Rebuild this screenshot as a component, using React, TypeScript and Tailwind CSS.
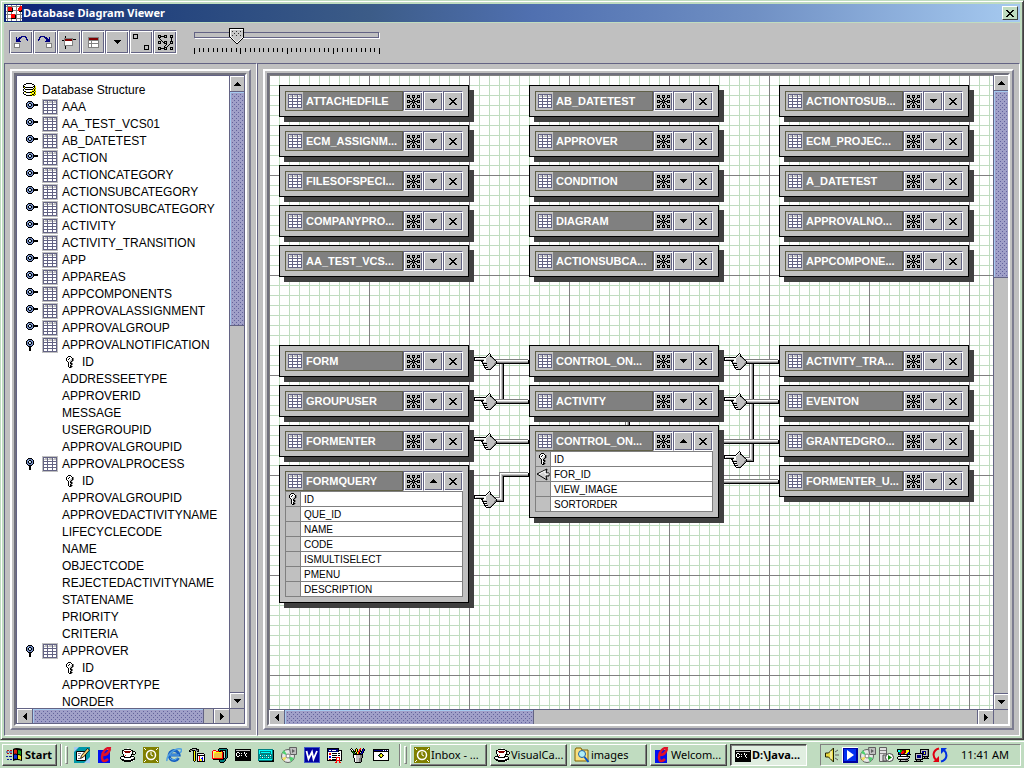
import React, { useState } from "react";

/* ---------- pixel drawings ---------- */

const INK: Record<string, string> = {
  k: "#000000", w: "#ffffff", g: "#808080", s: "#c0c0c0", d: "#404040",
  r: "#ff0000", m: "#800000", b: "#0000ff", n: "#000080", y: "#ffff00",
  o: "#808000", t: "#008080", c: "#00ffff", e: "#00a000", p: "#636384",
  l: "#a6caf0", a: "#f0c040", u: "#2070d0", v: "#7088c0", q: "#fff0a0",
};

function Pix({ rows, className }: { rows: string[]; className?: string }) {
  const width = Math.max(...rows.map((r) => r.length));
  return (
    <svg
      width={width}
      height={rows.length}
      viewBox={`0 0 ${width} ${rows.length}`}
      shapeRendering="crispEdges"
      aria-hidden="true"
      className={className ?? "shrink-0"}
    >
      {pixels(rows)}
    </svg>
  );
}

function pixels(rows: string[]) {
  const cells: React.ReactNode[] = [];
  rows.forEach((row, y) => {
    let x = 0;
    while (x < row.length) {
      const ch = row[x];
      let end = x + 1;
      while (end < row.length && row[end] === ch) end++;
      if (INK[ch]) {
        cells.push(<rect key={`${x}-${y}`} x={x} y={y} width={end - x} height={1} fill={INK[ch]} />);
      }
      x = end;
    }
  });
  return cells;
}

const DOWN = ["kkkkkkk", ".kkkkk.", "..kkk..", "...k..."];
const UP = [...DOWN].reverse();
const LEFT = ["...k", "..kk", ".kkk", "kkkk", ".kkk", "..kk", "...k"];
const RIGHT = LEFT.map((r) => [...r].reverse().join(""));
const CROSS = ["kk....kk", ".kk..kk.", "..kkkk..", "...kk...", "..kkkk..", ".kk..kk.", "kk....kk"];

const NETWORK = [
  "kkk..kkk..kkk",
  "k.k..k.k..k.k",
  "kkk..kkk..kkk",
  "...k..k..k...",
  "....k.k.k....",
  "kkk..kkk..kkk",
  "k.kkkk.kkkk.k",
  "kkk..kkk..kkk",
  "....k.k.k....",
  "...k..k..k...",
  "kkk..kkk..kkk",
  "k.k..k.k..k.k",
  "kkk..kkk..kkk",
];

const GRID = [
  "pppppppppppppp",
  "pwsspwssspwssp",
  "pssspsssspsssp",
  "pwwwpwwwwpwwwp",
  "pppppppppppppp",
  "pwwwpwwwwpwwwp",
  "pwwwpwwwwpwwwp",
  "pppppppppppppp",
  "pwwwpwwwwpwwwp",
  "pwwwpwwwwpwwwp",
  "pppppppppppppp",
  "pwwwpwwwwpwwwp",
  "pwwwpwwwwpwwwp",
  "pppppppppppppp",
];

const KEY = [
  "..kkk...",
  ".kwwwk..",
  "kwwkwwkg",
  "kwkwwskg",
  "kwwwsskg",
  ".kwsskg.",
  "..kwkg..",
  "..kwkkg.",
  "..kwskg.",
  "..kwkg..",
  "..kwkkg.",
  "...kkg..",
];

const HANDLE_CLOSED = [
  "..kkkk......",
  ".kvvvvk.....",
  "kvlkkvvk....",
  "kvkwlkvkkkkk",
  "kvkllkvkkkkk",
  "kvvkkvvk....",
  ".kvvvvk.....",
  "..kkkk......",
];
const HANDLE_OPEN = [
  "..kkkk..",
  ".kvvvvk.",
  "kvlkkvvk",
  "kvkwlkvk",
  "kvkllkvk",
  "kvvkkvvk",
  ".kvvvvk.",
  "..kkkk..",
  "...kk...",
  "...kk...",
  "...kk...",
  "...kk...",
];

const DATABASE = [
  "...kkkkkk....",
  ".kkwwwwwwkk..",
  "kwwwwwwwwwwk.",
  "kkwwwwwwwwkky",
  "kykkkkkkkkwky",
  ".kwwwwwwwwkyo",
  "kwkkkkkkkkyky",
  "kwwwwwwwwyyky",
  ".kkwwwwyykkyo",
  "kwykkkkkkyyky",
  "kwwwwwwwyyyky",
  ".kkwwwwyykkyo",
  "...kkkkkkyoo.",
];

const UNDO = [
  ".......nnnnn..",
  "..n..nnn...nn.",
  "..n.nnn.....n.",
  "..nnnn......nn",
  "..nnnn.......n",
  "..nnnnn.......",
  "..............",
  "gggggg........",
  "gwwwwg........",
  "gwwwwg........",
  "gwwwwg........",
  "gggggg........",
];
const REDO = UNDO.map((r) => [...r].reverse().join(""));
const PIVOT = [
  "...k..........",
  "...k..........",
  "..ggggggggg...",
  "..gmmmmmmmgkkk",
  "kkgmmmmmmmg...",
  "..gwwwwwwwg...",
  "..gwwwwwwwg...",
  "..gwwwwwwwg...",
  "..gwwwwwwwg...",
  "..ggggggggg...",
  "...k..........",
  "...k..........",
  "...k..........",
];
const FORM = [
  "ggggggggggg",
  "gmmmmmmmmmg",
  "gmmmmmmmmmg",
  "ggggggggggg",
  "gwwgwwwwwwg",
  "gwwgwwwwwwg",
  "ggggggggggg",
  "gwwgwwwwwwg",
  "gwwgwwwwwwg",
  "gwwgwwwwwwg",
  "ggggggggggg",
];
const TWO_BOXES = [
  "kkkkk...........",
  "k...k...........",
  "k...k...........",
  "k...k...........",
  "kkkkk...........",
  "................",
  "................",
  "................",
  "................",
  "................",
  "................",
  "...........kkkkk",
  "...........k...k",
  "...........k...k",
  "...........k...k",
  "...........kkkkk",
];
const WEB = [
  "kkk...kkk...kkk",
  "k.kkkkk.k...k.k",
  "kkk...kkk...kkk",
  ".k...........k.",
  "..k..........k.",
  "...k.........k.",
  "kkk.k.kkk...kkk",
  "k.k..kk.k...k.k",
  "kkk...kkk...kkk",
  "........k..k...",
  ".......k..k....",
  "......k..k.....",
  "kkk...kkk...kkk",
  "k.kkkkk.k...k.k",
  "kkk...kkk...kkk",
];
const APP = [
  "wgwwwgwwwwgwwwgw",
  "ggggggggggggggrr",
  "wgrrrrgwwwgwwrrr",
  "wgrrrrkwwwgwrrrr",
  "wgrrrrkwwwgwrrrr",
  "wgrrrrkgggggrrrk",
  "ggkkkkkwwwgwwkkk",
  "wgwwwgwwwwgwwwgw",
  "wgwwwgwwwwgwwwgw",
  "gggggrrrrggggggg",
  "wgwwwrrrrkgwwwgw",
  "wgwwwrrrrkgwwwgw",
  "wgwwwrrrrkgwwwgw",
  "gggggkkkkkgggggg",
  "wgwwwgwwwwgwwwgw",
  "wgwwwgwwwwgwwwgw",
];

const HAND = [
  "...............k.......",
  "..............kwk......",
  ".............kwsk......",
  "............kwsskk.....",
  "kkkkkkkkkkkkwssssgk....",
  "kwwwwwwwwwwwssssssgk...",
  "kwsssssssswwsssssssgk..",
  "kkkkkkkkkkwwssssssssgk.",
  ".......kkwwwssssssssssk",
  "........kssssssssssssgk",
  "........kkkkksssssssggk",
  ".........kwwssssssssgk.",
  ".........kkkkssssssgk..",
  "..........kwwsssssgk...",
  "..........kkkksssgk....",
  "...........kwwssgk.....",
  "............kkkkk......",
];

/* ---------- taskbar drawings ---------- */

const CUP = [
  ".......ww.......",
  "....kkkkkkk.....",
  "..kkwwwwwwwkk...",
  "..kwmmmmmmmwkkk.",
  "..kwwmmmmmwwk.wk",
  "..kwwwwwwwwwk.wk",
  "...kwwwwwwwkkkk.",
  "...kwrwwwwwkw...",
  ".kkkkwwwwwkkkk..",
  "kwwwkkkkkkkwwwk.",
  "kswwwwwwwwwwwgk.",
  ".kkkwwwwwwwkkkk.",
  "..kkkkkkkkkkkw..",
  "....kkkkkkkw....",
];
const DOS = [
  "kkkkkkkkkkkkkkkk",
  "kssssssssssssssk",
  "kkkkkkkkkkkkkkkk",
  "kkwwkkkkkwkkkkkk",
  "kwkkwkwkkwkwkkkk",
  "kwkkkkkkkkwkkkkk",
  "kwkkwkwkkkwkkkkk",
  "kkwwkkkkkkkwkkkk",
  "kkkkkkkkkkkkkkkk",
  "kkkkkkkkkkkkkkkk",
  "kkkkkkkkkkkkkkkk",
  "kkkkkkkkkkkkkkkk",
];
const CALC = [
  "ttttttttttttttt.",
  "tccccccccccccctk",
  "tctttttttttttctk",
  "tctccccccccctctk",
  "tctttttttttttctk",
  "tttttttttttttttk",
  "ttwtctctwtctwttk",
  "tttttttttttttttk",
  "ttctwtctctwtcttk",
  "tttttttttttttttk",
  "tccccccccccccctk",
  "ttttttttttttttkk",
  ".kkkkkkkkkkkkkkk",
];
const HAMMER = [
  "...kkkkk........",
  ".kkgssskkk......",
  "kggkkkgggk......",
  "kk..kyk.kk......",
  "....kyk.........",
  "....kyk.kkkkkkk.",
  "....kyk.kwwwwwwk",
  "....kyk.kkkkkkkk",
  "....kyk.kwrwwwwk",
  "....kyk.kwrwwbwk",
  "....kyk.kwrwbbwk",
  "....kyk.kwryybwk",
  "....kyk.kwryybwk",
  ".....k..kkkkkkkk",
];
const SHEET = [
  "kkkkkkkkkkkk....",
  "knnnnnnnnnnk....",
  "knwwnwwwwnnkkkk.",
  "knnnnnnnnnnkwwk.",
  "kwwwwwwwwwwwwwk.",
  "kwrrwkkkkkwkkwk.",
  "kwrrwwwwwwwwwwk.",
  "kwwwwkkkkkwkkwk.",
  "kwbbwwwwwwwwwwk.",
  "kwbbwkkkkrrrrwk.",
  "kwwwwwwwwrwwrwk.",
  "kwrrwkkkkrwwrwk.",
  "kkkkkkkkkrrrrkk.",
  ".........r..r...",
  "........rr..rr..",
];
const BROWSER = [
  "kkkkkkkkkkkkkkkk",
  "knnnnnnnnnwnwnwk",
  "kkkkkkkkkkkkkkkk",
  "kwwwwwwwwwwwwwwk",
  "kwwwwwwkkwwwwwwk",
  "kwwwwwkoykwwwwwk",
  "kwwwwkeyyokwwwwk",
  "kwwwwwkoykwwwwwk",
  "kwwwwwwkkwwwwwwk",
  "kwwwwwwwwwwwwwwk",
  "kwwwwwwwwwwwwwwk",
  "kkkkkkkkkkkkkkkk",
];
const PENS = [
  ".k....k...r..k..",
  "kwk..kyk.rr.kbk.",
  ".kwk.kyk.rk.kbk.",
  ".kekkkykrrkkbk..",
  "..kek.kyrk.kbk..",
  "...kekkyrkkbk...",
  "...kkkkkkkkkk...",
  "...kwwssssggk...",
  "...kwwssssggk...",
  "...kwwssssggk...",
  "....kwsssggk....",
  "....kwsssggk....",
  "....kwsssggk....",
  "....kwsssggk....",
  ".....kkkkkk.....",
];
const ZIP = [
  ".......kkkkkkkk.",
  "......kttttttttk",
  ".rrr..ktkkkkkktk",
  "rqqqrrrkkrk..ktk",
  "rqyyyyyyyyrk.ktk",
  "rqyaaaaaaark.ktk",
  "rqaaaaaaaark.ktk",
  "rqaaaaaaaark.ktk",
  "rqaaaaaaaark.ktk",
  "rqaaaaaaaark.ktk",
  "rrrrrrrrrrrkktk.",
  ".kkkkkkkkkkktk..",
  ".......ktttttk..",
  ".......kttttk...",
  "........kkkk....",
];
const DISPLAY = [
  ".kkkkkkkkkkkkk..",
  ".kcceemmmmyyyk..",
  ".kcceerrmmyyyk..",
  "..keerrrmmyybk..",
  "..kbbrrmmyybbk..",
  "..kkkkkkkkkkkkk.",
  "....kwwwwwgk....",
  "..kkkkkkkkkkkk..",
  ".kwwwwwwwwwssk..",
  ".kssssssssggk...",
  "..kkkkkkkkkk....",
  "....kssssgggk...",
  "...kkkkkkkkk....",
];
const MONITORS = [
  "......kkkkkkkkk.",
  "......kssssssgk.",
  "......ksnnnnsgk.",
  "......ksnnynsgk.",
  ".kkkkkkkknynsgk.",
  ".kssssssknnnsgk.",
  ".ksnnnnskssssgk.",
  ".ksnnnnskkkkkkk.",
  ".ksnnnnsk.kggk..",
  ".ksssssskkkkkkk.",
  ".kkkkkkkk.......",
  "..kgggk.........",
  "kkkkkkkkk.......",
];

function Art({ children }: { children: React.ReactNode }) {
  return (
    <svg width="16" height="16" viewBox="0 0 16 16" aria-hidden="true" className="shrink-0">
      {children}
    </svg>
  );
}
const NotePad = () => (
  <Art>
    <rect width="16" height="16" fill="#0098a8" />
    <path d="M0 0h5L0 5zM16 10v6h-6z" fill="#a6caf0" />
    <path d="M2.500 4.500h9v9h-9z" fill="#fff" stroke="#000" />
    <path d="M4 6.500h3M4 8.500h2M4 11.500h2" stroke="#808080" />
    <path d="M6.500 11.500l1-3 6-7 2 1.500-6 7z" fill="#f8d070" stroke="#000" strokeWidth=".8" />
  </Art>
);
const RedC = () => (
  <Art>
    <rect x="1" y="3" width="12" height="13" fill="#0010f0" />
    <path d="M14 1C9 0 5 5 5 10c0 5 3 5 6 2M6 8c4 0 6-3 7-6" fill="none" stroke="#e01028" strokeWidth="2.500" />
  </Art>
);
const Clock = () => (
  <Art>
    <rect width="16" height="16" fill="#808000" />
    <circle cx="8" cy="8" r="4.500" fill="none" stroke="#fff" strokeWidth="1.500" />
    <path d="M8 5v3l2 1M1 1l2 2M15 1l-2 2M1 15l2-2M15 15l-2-2" fill="none" stroke="#fff" />
  </Art>
);
const Explorer = () => (
  <Art>
    <path d="M12.500 11a5 5 0 1 1 .6-3H4" fill="none" stroke="#1860c0" strokeWidth="3" />
    <path d="M12 10a4.600 4.600 0 0 1-8 1M4 8h9" fill="none" stroke="#60b0f0" />
    <path d="M1 14C0 9 9 0 15 2c1 1 0 3-1 4" fill="none" stroke="#50a0e0" strokeWidth="1.500" />
  </Art>
);
const Disc = () => (
  <Art>
    <circle cx="7" cy="9" r="6.500" fill="#e8e8e8" stroke="#606060" />
    <path d="M7 9L1 6l2-3zM7 9l6 2-3 4z" fill="#50d070" />
    <path d="M7 9l-4 5-2-3z" fill="#f0e060" />
    <circle cx="7" cy="9" r="2" fill="#fff" stroke="#808080" />
    <path d="M8.500.5h7v7h-6z" fill="#c0c0c0" stroke="#606060" />
    <path d="M11 2l3 2-3 2z" fill="#606060" />
  </Art>
);
const Word = () => (
  <Art>
    <rect width="16" height="16" fill="#0000a0" />
    <rect x=".5" y=".5" width="15" height="15" fill="none" stroke="#80b0f0" strokeDasharray="1 1" />
    <path d="M2.500 4l2 8L8 5l1.500 7L13 4" fill="none" stroke="#fff" strokeWidth="1.800" />
  </Art>
);
const FolderFind = () => (
  <Art>
    <path d="M1 3l1-2h5l1 2h6v11H1z" fill="#f8e080" stroke="#806000" />
    <circle cx="8" cy="7" r="3.500" fill="#b0f0f8" stroke="#2060a0" />
    <path d="M10.500 10l4 5" stroke="#0050d0" strokeWidth="2" />
  </Art>
);
const Speaker = () => (
  <Art>
    <path d="M1.500 6h3l5-5v14l-5-5h-3z" fill="#e8d840" stroke="#202000" />
    <path d="M7 4v8" stroke="#fff" />
    <path d="M11 5l3-2M11 8h4M11 11l3 2" stroke="#606060" />
  </Art>
);
const Player = () => (
  <Art>
    <rect width="16" height="16" fill="#fff" />
    <rect x="1" y="1" width="15" height="15" fill="#0000a0" />
    <rect x="2" y="2" width="12" height="12" fill="#0030f0" />
    <path d="M5 3l7 5-7 5z" fill="#fff" />
  </Art>
);
const Server = () => (
  <Art>
    <path d="M1.500.5h7v14h-7z" fill="#e0e0e0" stroke="#606060" />
    <path d="M2 3.500h6M2 6.500h6" stroke="#808080" />
    <path d="M5 8h7v6H5z" fill="#c0c0c0" stroke="#505050" />
    <circle cx="11.500" cy="10.500" r="4" fill="#fff" stroke="#404040" />
    <path d="M10 8l4 2.500-4 2.500z" fill="#008000" />
  </Art>
);
const Sync = () => (
  <Art>
    <path d="M7 1.500C1 3 0 9 4 13" fill="none" stroke="#e00010" strokeWidth="2" />
    <path d="M1 15h6V9z" fill="#e00010" />
    <path d="M9 14.500c6-1.500 7-7.500 3-11.500" fill="none" stroke="#0030e0" strokeWidth="2" />
    <path d="M15 1H9v6z" fill="#0030e0" />
  </Art>
);
const Flag = () => (
  <svg width="17" height="16" viewBox="0 0 17 16" aria-hidden="true" className="shrink-0">
    <path d="M7 2q3-2 9 0v12q-5-2-9 0z" fill="#000" />
    <path d="M8 3q1-1 3 0v4q-2-1-3 0z" fill="#e02010" />
    <path d="M12 3q2 0 3 1v4q-1-1-3-1z" fill="#10a020" />
    <path d="M8 8q1-1 3 0v4q-2-1-3 0z" fill="#1030e0" />
    <path d="M12 8q2 0 3 1v4q-1-1-3-1z" fill="#f0e010" />
    <path d="M1 3.500h2M4 3.500h2M1 6.500h2M4 6.500h2" stroke="#c01010" />
    <path d="M0 5h2M3 5h3M0 9.500h2M3 9.500h3M1 12.500h2M4 12.500h2" stroke="#1020a0" />
  </svg>
);

/* ---------- shared pieces ---------- */

type FlatProps = { label: string; className: string; children: React.ReactNode };
function FlatButton({ label, className, children }: FlatProps) {
  return (
    <button
      type="button"
      aria-label={label}
      className={`flex shrink-0 items-center justify-center border border-t-[#636384] border-l-[#636384] border-r-white border-b-white bg-[#c0c0c0] shadow-[inset_1px_1px_0_#fff,inset_-1px_-1px_0_#636384] ${className}`}
    >
      {children}
    </button>
  );
}

function ScrollBar({ vertical, size }: { vertical?: boolean; size: string }) {
  const button =
    "flex shrink-0 items-center justify-center bg-[#c0c0c0] border-[#636384] shadow-[inset_1px_1px_0_#fff]";
  const thumb =
    "border-[#636384] bg-[#a0a0c8] shadow-[inset_1px_1px_0_#a6caf0] bg-[conic-gradient(at_1px_1px,transparent_75%,#63639c_0),conic-gradient(at_1px_1px,transparent_75%,#63639c_0)] bg-[length:4px_4px] bg-[position:0_0,2px_2px]";
  return vertical ? (
    <div className="flex h-full flex-col border-l border-[#636384] bg-[#c0c0c0]">
      <button type="button" aria-label="Scroll up" className={`h-4 border-b ${button}`}>
        <Pix rows={UP} />
      </button>
      <div className="min-h-0 flex-1">
        <div className={`w-full border-b ${thumb}`} style={{ height: size }} />
      </div>
      <button type="button" aria-label="Scroll down" className={`h-4 border-t ${button}`}>
        <Pix rows={DOWN} />
      </button>
    </div>
  ) : (
    <div className="flex h-full border-t border-[#636384] bg-[#c0c0c0]">
      <button type="button" aria-label="Scroll left" className={`w-4 border-r ${button}`}>
        <Pix rows={LEFT} />
      </button>
      <div className="min-w-0 flex-1">
        <div className={`h-full border-r ${thumb}`} style={{ width: size }} />
      </div>
      <button type="button" aria-label="Scroll right" className={`w-4 border-l ${button}`}>
        <Pix rows={RIGHT} />
      </button>
    </div>
  );
}

type PaneProps = { children: React.ReactNode; vSize: string; hSize: string; lined?: boolean };
function ScrollPane({ children, vSize, hSize, lined }: PaneProps) {
  return (
    <div className="flex min-h-0 min-w-0 flex-1 border-2 border-t-white border-l-white border-r-[#7c7c90] border-b-[#7c7c90] bg-[#c0c0c0] p-[2px]">
      <div className="flex min-h-0 min-w-0 flex-1 border-2 border-t-[#70707c] border-l-[#70707c] border-r-white border-b-white">
        <div
          className={`grid min-h-0 min-w-0 flex-1 grid-cols-[minmax(0,1fr)_15px] grid-rows-[minmax(0,1fr)_15px] ${
            lined ? "border border-[#636384]" : ""
          }`}
        >
          <div className="min-h-0 min-w-0 overflow-hidden bg-white">{children}</div>
          <ScrollBar vertical size={vSize} />
          <ScrollBar size={hSize} />
          <div className="border-t border-l border-[#636384] bg-[#c0c0c0]" />
        </div>
      </div>
    </div>
  );
}

/* ---------- tree ---------- */

type Kind = "closed" | "open" | "key" | "field";
const TREE: [Kind, string][] = [
  ["closed", "AAA"], ["closed", "AA_TEST_VCS01"], ["closed", "AB_DATETEST"], ["closed", "ACTION"],
  ["closed", "ACTIONCATEGORY"], ["closed", "ACTIONSUBCATEGORY"], ["closed", "ACTIONTOSUBCATEGORY"],
  ["closed", "ACTIVITY"], ["closed", "ACTIVITY_TRANSITION"], ["closed", "APP"], ["closed", "APPAREAS"],
  ["closed", "APPCOMPONENTS"], ["closed", "APPROVALASSIGNMENT"], ["closed", "APPROVALGROUP"],
  ["open", "APPROVALNOTIFICATION"], ["key", "ID"], ["field", "ADDRESSEETYPE"], ["field", "APPROVERID"],
  ["field", "MESSAGE"], ["field", "USERGROUPID"], ["field", "APPROVALGROUPID"],
  ["open", "APPROVALPROCESS"], ["key", "ID"], ["field", "APPROVALGROUPID"],
  ["field", "APPROVEDACTIVITYNAME"], ["field", "LIFECYCLECODE"], ["field", "NAME"], ["field", "OBJECTCODE"],
  ["field", "REJECTEDACTIVITYNAME"], ["field", "STATENAME"], ["field", "PRIORITY"], ["field", "CRITERIA"],
  ["open", "APPROVER"], ["key", "ID"], ["field", "APPROVERTYPE"], ["field", "NORDER"],
];

function TreeRow({ kind, name }: { kind: Kind; name: string }) {
  const label = <span className="pt-[2px]">{name}</span>;
  if (kind === "key") {
    return (
      <li className="flex h-[17px] items-center gap-2 pl-[49px]">
        <Pix rows={KEY} />
        {label}
      </li>
    );
  }
  if (kind === "field") {
    return <li className="flex h-[17px] items-center pl-[45px]">{label}</li>;
  }
  return (
    <li className="flex h-[17px] items-center pl-[9px]">
      <button type="button" aria-label={`Toggle ${name}`} className="flex h-[17px] w-4 shrink-0 items-start pt-[3px]">
        <Pix rows={kind === "open" ? HANDLE_OPEN : HANDLE_CLOSED} />
      </button>
      <span className="mr-1 flex h-4 w-4 shrink-0 items-center justify-center bg-[#c0c0c0]">
        <Pix rows={GRID} />
      </span>
      {label}
    </li>
  );
}

/* ---------- diagram ---------- */

type Column = { name: string; mark?: "key" | "link" };
type Entity = { x: number; y: number; name: string; columns?: Column[] };

const ENTITIES: Entity[] = [
  { x: 10, y: 10, name: "ATTACHEDFILE" },
  { x: 10, y: 50, name: "ECM_ASSIGNM..." },
  { x: 10, y: 90, name: "FILESOFSPECI..." },
  { x: 10, y: 130, name: "COMPANYPRO..." },
  { x: 10, y: 170, name: "AA_TEST_VCS..." },
  { x: 260, y: 10, name: "AB_DATETEST" },
  { x: 260, y: 50, name: "APPROVER" },
  { x: 260, y: 90, name: "CONDITION" },
  { x: 260, y: 130, name: "DIAGRAM" },
  { x: 260, y: 170, name: "ACTIONSUBCA..." },
  { x: 510, y: 10, name: "ACTIONTOSUB..." },
  { x: 510, y: 50, name: "ECM_PROJEC..." },
  { x: 510, y: 90, name: "A_DATETEST" },
  { x: 510, y: 130, name: "APPROVALNO..." },
  { x: 510, y: 170, name: "APPCOMPONE..." },
  { x: 10, y: 270, name: "FORM" },
  { x: 10, y: 310, name: "GROUPUSER" },
  { x: 10, y: 350, name: "FORMENTER" },
  {
    x: 10, y: 390, name: "FORMQUERY",
    columns: [
      { name: "ID", mark: "key" }, { name: "QUE_ID" }, { name: "NAME" }, { name: "CODE" },
      { name: "ISMULTISELECT" }, { name: "PMENU" }, { name: "DESCRIPTION" },
    ],
  },
  { x: 260, y: 270, name: "CONTROL_ON..." },
  { x: 260, y: 310, name: "ACTIVITY" },
  {
    x: 260, y: 350, name: "CONTROL_ON...",
    columns: [
      { name: "ID", mark: "key" }, { name: "FOR_ID", mark: "link" }, { name: "VIEW_IMAGE" }, { name: "SORTORDER" },
    ],
  },
  { x: 510, y: 270, name: "ACTIVITY_TRA..." },
  { x: 510, y: 310, name: "EVENTON" },
  { x: 510, y: 350, name: "GRANTEDGRO..." },
  { x: 510, y: 390, name: "FORMENTER_U..." },
];

const LINKS = [
  "233,288 233,328",
  "226,287 260,287",
  "226,327 260,327",
  "226,367 260,367",
  "226,425 233,425 233,400 260,400",
  "483,288 483,385 476,385",
  "476,287 510,287",
  "476,327 510,327",
  "450,367 510,367",
  "450,407 510,407",
  "359,340 359,352",
];
const HANDS = [
  [205, 278], [205, 318], [205, 358], [205, 416],
  [455, 278], [455, 318], [455, 376],
];

function Connections() {
  return (
    <svg
      width="724"
      height="634"
      viewBox="0 0 724 634"
      shapeRendering="crispEdges"
      aria-hidden="true"
      className="absolute top-0 left-0"
    >
      {LINKS.map((points) => (
        <g key={points} fill="none" strokeLinejoin="miter">
          <polyline points={points} stroke="#000" strokeWidth="4" />
          <polyline points={points} stroke="#808080" strokeWidth="4" transform="translate(-1 -1)" />
          <polyline points={points} stroke="#c8c8c8" strokeWidth="2" transform="translate(-1 -1)" />
          <polyline points={points} stroke="#fff" strokeWidth="1" transform="translate(-1.500 -1.500)" />
        </g>
      ))}
      {HANDS.map(([x, y]) => (
        <g key={`${x}-${y}`} transform={`translate(${x} ${y})`}>
          {pixels(HAND)}
        </g>
      ))}
    </svg>
  );
}

function LinkMark() {
  return (
    <svg width="14" height="13" viewBox="0 0 14 13" aria-hidden="true" className="shrink-0">
      <path d="M1 6l10-5-1 4h3v3h-3l1 4z" fill="#d0d0d0" stroke="#000" />
      <path d="M3 6l6-3v3h4" fill="none" stroke="#fff" />
    </svg>
  );
}

function EntityCard({ entity }: { entity: Entity }) {
  const { x, y, name, columns } = entity;
  return (
    <section
      className="absolute w-[190px] border border-black bg-[#c0c0c0] p-[5px] shadow-[5px_5px_0_#404040]"
      style={{ left: x, top: y }}
    >
      <header className="flex h-5">
        <div className="flex min-w-0 flex-1 border border-[#606048] bg-[#808080]">
          <span className="flex w-[17px] shrink-0 items-center justify-center bg-[#c0c0c0]">
            <Pix rows={GRID} />
          </span>
          <h2 className="min-w-0 flex-1 overflow-hidden pl-[3px] text-[11px] leading-[18px] font-bold whitespace-nowrap text-white">
            {name}
          </h2>
        </div>
        <FlatButton label={`Show relations of ${name}`} className="w-5">
          <Pix rows={NETWORK} />
        </FlatButton>
        <FlatButton label={columns ? `Collapse ${name}` : `Expand ${name}`} className="w-5">
          <Pix rows={columns ? UP : DOWN} />
        </FlatButton>
        <FlatButton label={`Close ${name}`} className="w-5">
          <Pix rows={CROSS} />
        </FlatButton>
      </header>
      {columns && (
        <table className="w-full table-fixed border-separate border-spacing-0 border-t border-l border-[#808080] text-[10px] leading-[12px]">
          <colgroup>
            <col className="w-[15px]" />
            <col />
          </colgroup>
          <tbody>
            {columns.map((c) => (
              <tr key={c.name}>
                <td className="h-[15px] border-r border-b border-[#808080] bg-[#c0c0c0] p-0">
                  <span className="flex h-[14px] items-center justify-center">
                    {c.mark === "key" && <Pix rows={KEY} />}
                    {c.mark === "link" && <LinkMark />}
                  </span>
                </td>
                <td className="h-[15px] border-r border-b border-[#808080] bg-white p-0 pt-[2px] pl-[3px]">{c.name}</td>
              </tr>
            ))}
          </tbody>
        </table>
      )}
    </section>
  );
}

/* ---------- toolbar ---------- */

const TOOLS: { label: string; rows: string[] }[] = [
  { label: "Undo", rows: UNDO },
  { label: "Redo", rows: REDO },
  { label: "Center table", rows: PIVOT },
  { label: "Table view", rows: FORM },
  { label: "Options", rows: DOWN },
  { label: "Link tables", rows: TWO_BOXES },
  { label: "Arrange all", rows: WEB },
];

function ZoomSlider() {
  const [value, setValue] = useState(9);
  const thumb = 1 + Math.round((value / 40) * 185);
  return (
    <div className="relative h-[30px] w-[188px]">
      <svg width="188" height="30" viewBox="0 0 188 30" shapeRendering="crispEdges" aria-hidden="true">
        <rect x="2" y="6" width="185" height="6" fill="#fff" />
        <rect x="1" y="5" width="185" height="6" fill="#636384" />
        <rect x="2" y="6" width="183" height="4" fill="#c0c0c0" />
        {Array.from({ length: 41 }, (_, i) => (
          <rect key={i} x={1 + Math.round(i * 4.625)} y="21" width="1" height={i % 10 ? 4 : 6} fill="#000" />
        ))}
        <g transform={`translate(${thumb - 7} 1)`}>
          <path d="M0 0h15v9l-7 7h-1L0 9z" fill="#000" />
          <path d="M1 1h13v8l-6 6h-1L1 9z" fill="#fff" />
          <path d="M2 2h12v7l-6 5L2 9z" fill="#c8c8c8" />
          <path
            d="M3 3h1v1h-1zM7 3h1v1h-1zM11 3h1v1h-1zM5 5h1v1h-1zM9 5h1v1h-1zM3 7h1v1h-1zM7 7h1v1h-1zM11 7h1v1h-1z"
            fill="#303030"
          />
        </g>
      </svg>
      <input
        type="range"
        aria-label="Zoom"
        min={0}
        max={40}
        value={value}
        onChange={(e) => setValue(Number(e.target.value))}
        className="absolute inset-0 h-full w-full opacity-0"
      />
    </div>
  );
}

/* ---------- taskbar ---------- */

const QUICK: { label: string; icon: React.ReactNode }[] = [
  { label: "Show desktop", icon: <NotePad /> },
  { label: "Editor", icon: <RedC /> },
  { label: "Java", icon: <Pix rows={CUP} /> },
  { label: "Outlook", icon: <Clock /> },
  { label: "Internet Explorer", icon: <Explorer /> },
  { label: "Build tools", icon: <Pix rows={HAMMER} /> },
  { label: "Archive", icon: <Pix rows={ZIP} /> },
  { label: "Command prompt", icon: <Pix rows={DOS} /> },
  { label: "Calculator", icon: <Pix rows={CALC} /> },
  { label: "CD player", icon: <Disc /> },
  { label: "Word", icon: <Word /> },
  { label: "Reports", icon: <Pix rows={SHEET} /> },
  { label: "Paint", icon: <Pix rows={PENS} /> },
  { label: "Viewer", icon: <Pix rows={BROWSER} /> },
];

const TASKS: { label: string; icon: React.ReactNode; active?: boolean }[] = [
  { label: "Inbox - ...", icon: <Clock /> },
  { label: "VisualCa...", icon: <Pix rows={CUP} /> },
  { label: "images", icon: <FolderFind /> },
  { label: "Welcom...", icon: <RedC /> },
  { label: "D:\\Java...", icon: <Pix rows={DOS} />, active: true },
];

function Grip() {
  return (
    <div className="flex h-[22px] shrink-0 items-center gap-[3px]">
      <span className="h-full w-[2px] border-l border-[#808080] bg-white" />
      <span className="h-[18px] w-[3px] border border-t-white border-r-[#808080] border-b-[#808080] border-l-white" />
    </div>
  );
}

function Taskbar() {
  return (
    <footer className="flex h-7 shrink-0 items-center border-t border-[#c0dcc0] bg-[#c0dcc0] pt-px pr-[3px] pl-[2px] font-['Noto_Sans',sans-serif] text-[11px] shadow-[inset_0_1px_0_#fff]">
      <button
        type="button"
        className="flex h-[22px] w-[55px] shrink-0 items-center gap-[2px] border border-t-white border-r-[#404040] border-b-[#404040] border-l-white pl-[3px] font-bold shadow-[inset_-1px_-1px_0_#808080]"
      >
        <Flag />
        Start
      </button>
      <div className="ml-[3px] flex">
        <Grip />
      </div>
      <nav aria-label="Quick launch" className="ml-[6px] flex shrink-0 items-center gap-[7px]">
        {QUICK.map((q) => (
          <button key={q.label} type="button" aria-label={q.label} className="flex h-4 w-4 items-center justify-center">
            {q.icon}
          </button>
        ))}
      </nav>
      <div className="ml-[10px] flex">
        <Grip />
      </div>
      <nav aria-label="Open windows" className="ml-[3px] flex min-w-0 flex-1 gap-[3px]">
        {TASKS.map((t) => (
          <button
            key={t.label}
            type="button"
            className={
              t.active
                ? "flex h-[22px] w-[77px] items-center gap-px border border-t-[#404040] border-r-white border-b-white border-l-[#404040] bg-[#e0eee0] pt-px pl-[4px] font-bold whitespace-nowrap shadow-[inset_1px_1px_0_#808080]"
                : "flex h-[22px] w-[77px] items-center gap-px border border-t-white border-r-[#404040] border-b-[#404040] border-l-white pl-[3px] whitespace-nowrap shadow-[inset_-1px_-1px_0_#808080]"
            }
          >
            {t.icon}
            <span>{t.label}</span>
          </button>
        ))}
      </nav>
      <div className="flex h-[22px] w-[201px] shrink-0 items-center gap-[2px] border border-t-[#808080] border-r-white border-b-white border-l-[#808080] pl-[3px]">
        <Speaker />
        <Player />
        <Disc />
        <Server />
        <Pix rows={DISPLAY} />
        <Pix rows={MONITORS} />
        <Sync />
        <time className="flex-1 pr-[11px] text-right whitespace-nowrap">11:41 AM</time>
      </div>
    </footer>
  );
}

/* ---------- page ---------- */

export default function App() {
  return (
    <div className="flex h-screen flex-col overflow-hidden bg-[#c0dcc0] font-['Liberation_Sans',Arial,sans-serif] text-black">
      <main className="flex min-h-0 flex-1 flex-col border border-t-[#c0dcc0] border-r-[#404040] border-b-[#404040] border-l-[#c0dcc0] p-[3px] shadow-[inset_1px_1px_0_#fff,inset_-1px_-1px_0_#606060]">
        <header className="flex h-[18px] shrink-0 items-center gap-px bg-[linear-gradient(90deg,#0a1f78_0%,#20407c_12%,#3c5c88_36%,#5070b0_52%,#7090c4_74%,#a6caf0_100%)] px-[2px]">
          <Pix rows={APP} />
          <h1 className="min-w-0 flex-1 font-['Noto_Sans',sans-serif] text-[11px] leading-[18px] font-bold text-white">
            Database Diagram Viewer
          </h1>
          <button
            type="button"
            aria-label="Close"
            className="flex h-[14px] w-4 items-center justify-center border border-t-white border-r-[#404040] border-b-[#404040] border-l-white bg-[#c0dcc0]"
          >
            <Pix rows={CROSS} />
          </button>
        </header>
        <div className="flex h-[41px] shrink-0 items-start border-t border-[#c0dcc0] bg-[#c0c0c0] pl-[5px]">
          <div className="flex pt-[7px]">
            {TOOLS.map((t) => (
              <FlatButton key={t.label} label={t.label} className="h-6 w-6">
                <Pix rows={t.rows} />
              </FlatButton>
            ))}
          </div>
          <div className="pt-[4px] pl-4">
            <ZoomSlider />
          </div>
        </div>
        <div className="grid min-h-0 flex-1 grid-cols-[253px_minmax(0,1fr)] grid-rows-[minmax(0,1fr)] bg-[#c0c0c0]">
          <div className="flex min-h-0 min-w-0 border border-t-[#636384] border-r-white border-b-white border-l-[#636384] p-[5px]">
            <ScrollPane vSize="39%" hSize="95%" lined>
              <div className="pt-[5px] text-[12px] leading-[15px] whitespace-nowrap">
                <div className="flex h-[17px] items-center gap-[6px] pl-[6px]">
                  <Pix rows={DATABASE} />
                  <span className="pt-[2px]">Database Structure</span>
                </div>
                <ul>
                  {TREE.map(([kind, name], i) => (
                    <TreeRow key={i} kind={kind} name={name} />
                  ))}
                </ul>
              </div>
            </ScrollPane>
          </div>
          <div className="flex min-h-0 min-w-0 border border-t-[#636384] border-r-white border-b-white border-l-[#636384] p-[5px]">
            <ScrollPane vSize="31%" hSize="36%">
              <div className="relative h-full overflow-hidden bg-[linear-gradient(90deg,#808080_1px,transparent_1px),linear-gradient(#808080_1px,transparent_1px),linear-gradient(90deg,#c0dcc0_1px,transparent_1px),linear-gradient(#c0dcc0_1px,transparent_1px)] bg-[length:100px_100px,100px_100px,10px_10px,10px_10px]">
                <Connections />
                {ENTITIES.map((e) => (
                  <EntityCard key={`${e.x}-${e.y}`} entity={e} />
                ))}
              </div>
            </ScrollPane>
          </div>
        </div>
      </main>
      <Taskbar />
    </div>
  );
}
